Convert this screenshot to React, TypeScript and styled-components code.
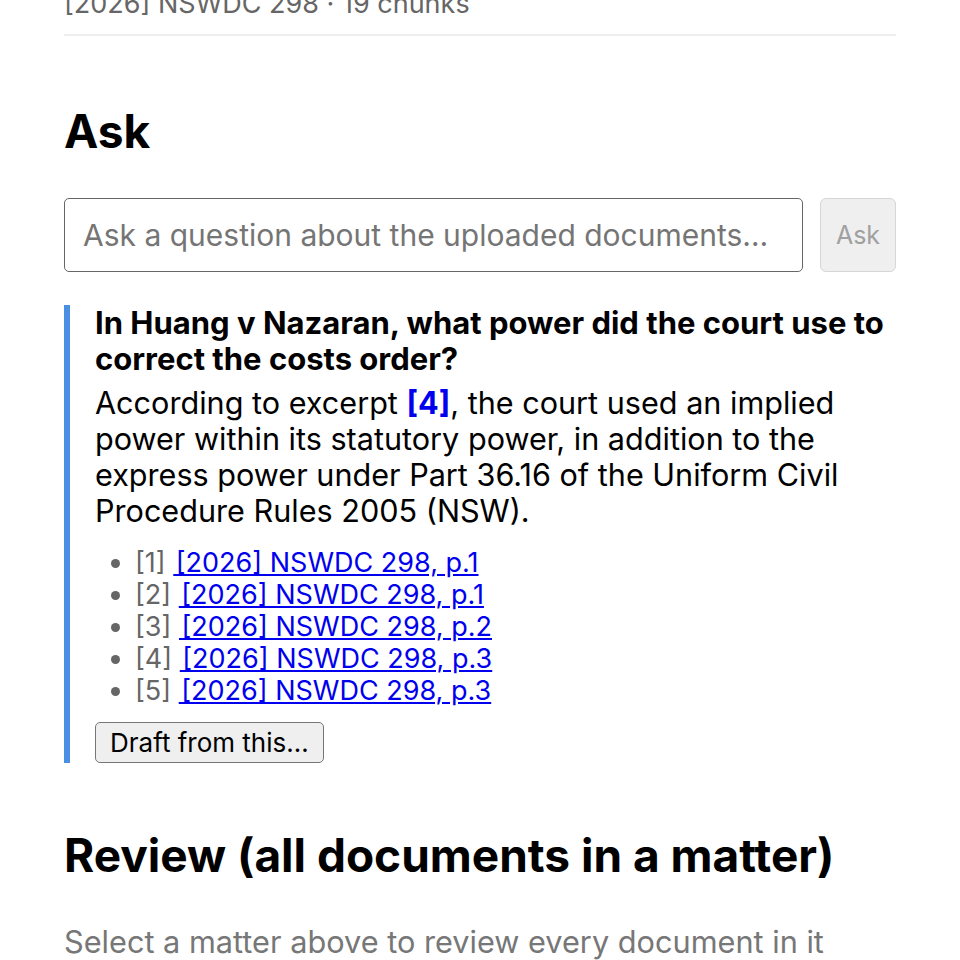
import React, { useState } from "react"
import styled, { createGlobalStyle } from "styled-components"

const GlobalStyle = createGlobalStyle`
  html, body {
    margin: 0;
    padding: 0;
    background: #fff;
  }
  body {
    font-family: Inter, "Liberation Sans", Arial, sans-serif;
    color: #000;
    overflow: hidden;
  }
`

const Page = styled.main`
  width: 832px;
  padding: 0 64px;
`

const MetaLine = styled.div`
  margin-top: -14px;
  font-size: 27px;
  line-height: 36px;
  color: #666;
`

const Divider = styled.hr`
  margin: 0;
  margin-top: 12px;
  border: 0;
  border-top: 2px solid #eee;
`

const SectionTitle = styled.h2<{ $top: number }>`
  margin: ${(p) => p.$top}px 0 0;
  font-size: 46px;
  line-height: 56px;
  font-weight: 700;
`

const AskRow = styled.form`
  display: flex;
  gap: 17px;
  margin-top: 39px;
`

const QuestionInput = styled.input`
  flex: 1;
  height: 74px;
  box-sizing: border-box;
  padding: 0 18px;
  border: 1.5px solid #666;
  border-radius: 5px;
  font-family: inherit;
  font-size: 30px;
  color: #000;
  &::placeholder {
    color: #757575;
  }
`

const AskButton = styled.button`
  width: 76px;
  height: 74px;
  box-sizing: border-box;
  border: 1.5px solid #d6d6d6;
  border-radius: 6px;
  background: #efefef;
  color: #a0a0a0;
  font-family: inherit;
  font-size: 25px;
`

const Answer = styled.section`
  margin-top: 33px;
  border-left: 6px solid #4a90e2;
  padding-left: 25px;
`

const Question = styled.div`
  font-size: 31px;
  line-height: 36px;
  font-weight: 700;
`

const AnswerText = styled.p`
  margin: 8px 0 0;
  font-size: 30.6px;
  line-height: 36px;
`

const Cite = styled.a`
  color: #0000ee;
  font-weight: 700;
  text-decoration: none;
`

const Sources = styled.ul`
  margin: 18px 0 0;
  padding-left: 40px;
  font-size: 27px;
  line-height: 32px;
  color: #666;
`

const SourceLink = styled.a`
  color: #0000ee;
  text-decoration: underline;
`

const DraftButton = styled.button`
  display: block;
  margin-top: 15px;
  height: 41px;
  padding: 0 14px;
  border: 1.5px solid #767676;
  border-radius: 5px;
  background: #efefef;
  color: #000;
  font-family: inherit;
  font-size: 26px;
`

const Hint = styled.p`
  margin: 41px 0 0;
  font-size: 30.7px;
  line-height: 36px;
  color: #777;
`

const sources = [
  { n: 1, label: "[2026] NSWDC 298, p.1" },
  { n: 2, label: "[2026] NSWDC 298, p.1" },
  { n: 3, label: "[2026] NSWDC 298, p.2" },
  { n: 4, label: "[2026] NSWDC 298, p.3" },
  { n: 5, label: "[2026] NSWDC 298, p.3" },
]

const App: React.FC = () => {
  const [query, setQuery] = useState("")

  return (
    <>
      <GlobalStyle />
      <Page>
        <MetaLine>[2026] NSWDC 298 · 19 chunks</MetaLine>
        <Divider />

        <SectionTitle $top={67}>Ask</SectionTitle>
        <AskRow onSubmit={(e) => e.preventDefault()}>
          <QuestionInput
            value={query}
            onChange={(e) => setQuery(e.target.value)}
            placeholder="Ask a question about the uploaded documents…"
          />
          <AskButton type="submit" disabled={!query}>
            Ask
          </AskButton>
        </AskRow>

        <Answer>
          <Question>
            In Huang v Nazaran, what power did the court use to correct the
            costs order?
          </Question>
          <AnswerText>
            According to excerpt <Cite href="#src-4">[4]</Cite>, the court used
            an implied power within its statutory power, in addition to the
            express power under Part 36.16 of the Uniform Civil Procedure Rules
            2005 (NSW).
          </AnswerText>
          <Sources>
            {sources.map((s) => (
              <li key={s.n} id={`src-${s.n}`}>
                [{s.n}] <SourceLink href="#">{"\u200a" + s.label}</SourceLink>
              </li>
            ))}
          </Sources>
          <DraftButton type="button">Draft from this…</DraftButton>
        </Answer>

        <SectionTitle $top={64}>Review (all documents in a matter)</SectionTitle>
        <Hint>Select a matter above to review every document in it</Hint>
      </Page>
    </>
  )
}

export default App
